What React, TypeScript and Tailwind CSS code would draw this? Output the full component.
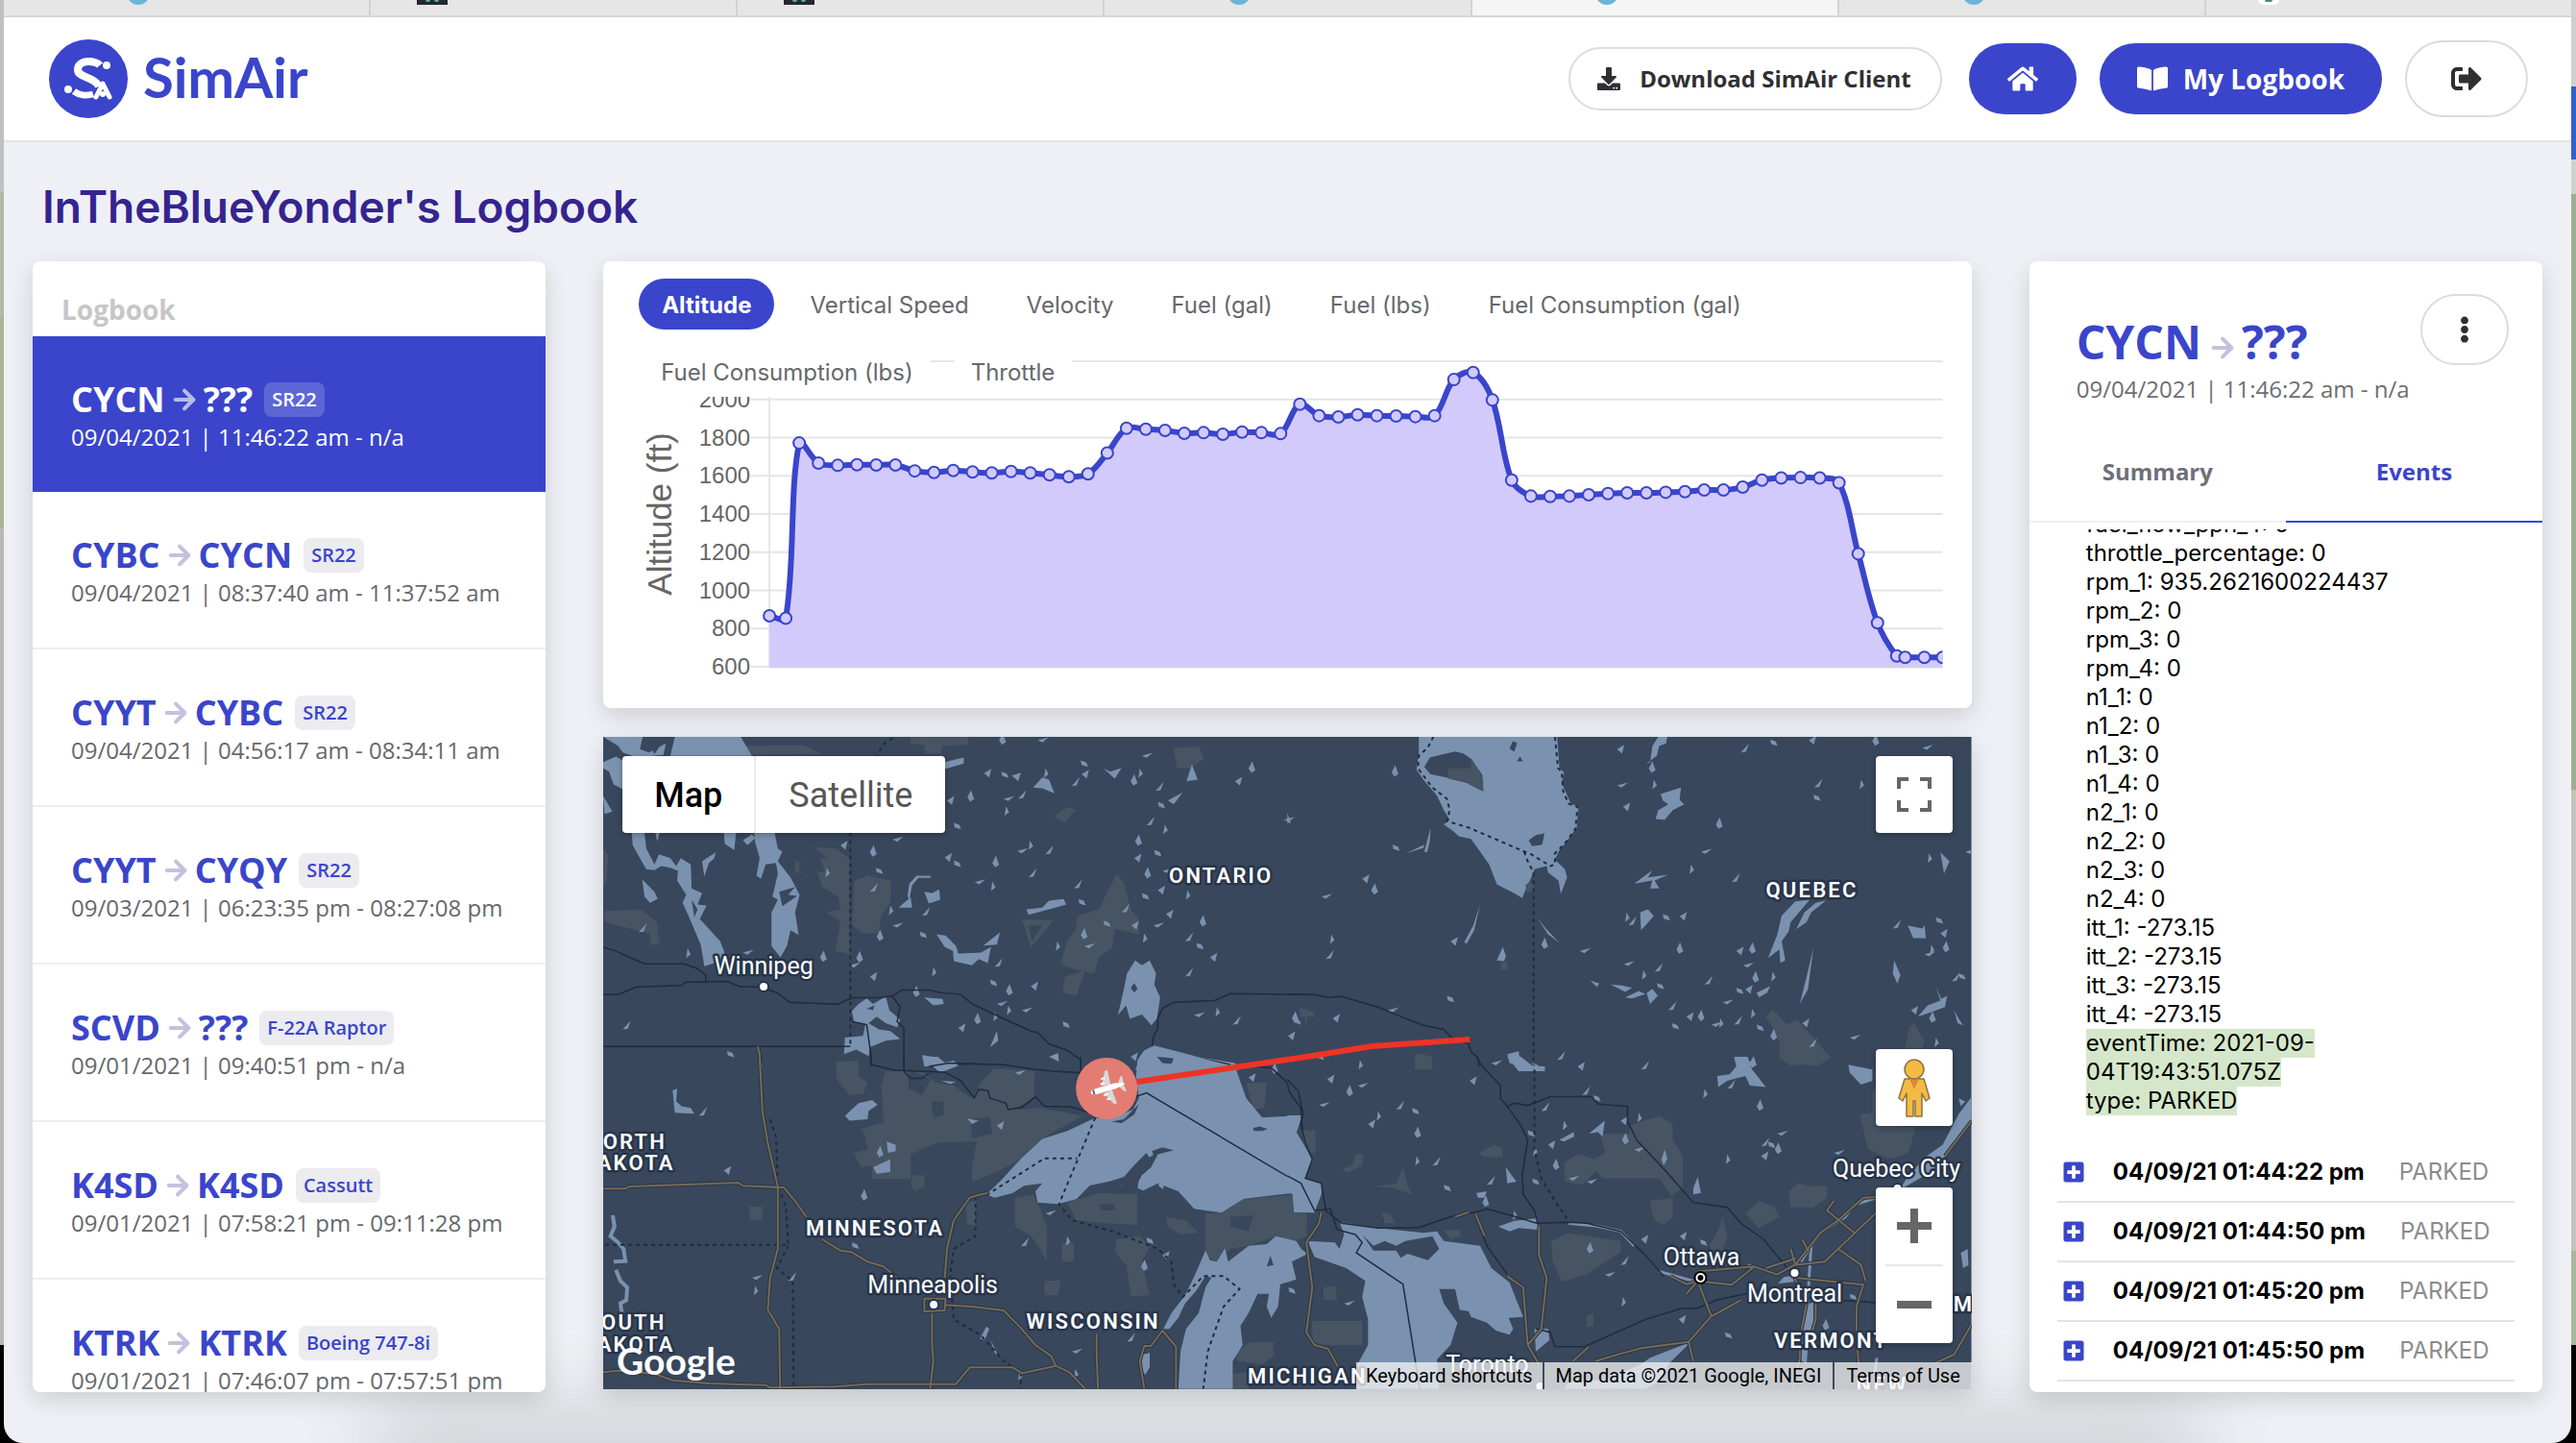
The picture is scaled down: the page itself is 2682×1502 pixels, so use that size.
import React from "react";
import { ArrowRight } from "lucide-react";
import {
  FaBookOpen,
  FaDownload,
  FaEllipsisV,
  FaHome,
  FaPlusSquare,
  FaSignOutAlt,
} from "react-icons/fa";

const body = "font-['Open_Sans','Noto_Sans',sans-serif]";
const inter = "font-['Inter',sans-serif]";

/* ---------- window chrome ---------- */

type Favicon = "blue" | "dark" | "google";

const browserTabs: { icon: Favicon; active?: boolean }[] = [
  { icon: "blue" },
  { icon: "dark" },
  { icon: "dark" },
  { icon: "blue" },
  { icon: "blue", active: true },
  { icon: "blue" },
  { icon: "google" },
];

function TabIcon({ icon }: { icon: Favicon }) {
  if (icon === "blue") {
    return <span className="-mt-[19px] ml-32 block size-6 rounded-full bg-[#6cb4d8]" />;
  }
  if (icon === "dark") {
    return (
      <span className="ml-12 flex h-[5px] w-8 justify-center gap-1 bg-[#23292e]">
        <span className="h-[2px] w-[5px] rounded-b-full bg-[#5fae98]" />
        <span className="h-[2px] w-[5px] rounded-b-full bg-[#5fae98]" />
      </span>
    );
  }
  return (
    <span className="ml-[54px] flex h-[5px] w-[22px] justify-center rounded-b-full bg-white">
      <span className="h-[2px] w-2 rounded-b-full bg-[#3f8f66]" />
    </span>
  );
}

function BrowserTabs() {
  return (
    <div className="flex h-[18px] shrink-0 overflow-hidden border-b-2 border-[#d6d6d6] bg-[#e6e6e6]">
      {browserTabs.map((tab, i) => (
        <button
          key={i}
          type="button"
          aria-label={`Tab ${i + 1}`}
          className={`flex flex-1 items-start border-r-2 last:border-r-0 border-[#d2d2d2] ${tab.active ? "bg-[#f5f5f5]" : ""}`}
        >
          <TabIcon icon={tab.icon} />
        </button>
      ))}
    </div>
  );
}

function Logo() {
  return (
    <a href="#" className="flex items-center gap-4 text-[#3a45cb]">
      <svg viewBox="0 0 82 82" className="size-[82px]" aria-hidden="true">
        <circle cx="41" cy="41" r="41" fill="#3a45cb" />
        <g fill="none" stroke="#fff" strokeLinecap="butt">
          <path d="M53 27C49 22 31 20 30 31C29 40 48 39 52 49" strokeWidth="8" />
          <path d="M26 54C31 58 39 59 46 57" strokeWidth="7" />
          <path d="M49 60L56 46L63 60" strokeWidth="5" strokeLinejoin="round" strokeLinecap="round" />
        </g>
        <circle cx="60" cy="27" r="4" fill="#fff" />
        <circle cx="20" cy="52" r="4" fill="#fff" />
        <circle cx="56" cy="57" r="3" fill="#fff" />
      </svg>
      <span className="pb-1 font-['Lato',sans-serif] text-[58px] font-bold leading-none">SimAir</span>
    </a>
  );
}

function Header() {
  return (
    <header className="flex h-[130px] shrink-0 items-center justify-between border-b-2 border-[#e0e3e8] bg-white pl-[47px] pr-[45px]">
      <Logo />
      <nav className={`flex items-center gap-6 ${body} font-bold`}>
        <button
          type="button"
          className="mr-1 flex h-[66px] items-center gap-5 rounded-full border-2 border-[#dcdcdc] pl-7 pr-[30px] text-2xl text-[#2f3033]"
        >
          <FaDownload className="size-6" />
          Download SimAir Client
        </button>
        <button
          type="button"
          aria-label="Home"
          className="flex h-[74px] w-28 items-center justify-center rounded-full bg-[#3a45cb] text-white"
        >
          <FaHome className="size-8" />
        </button>
        <button
          type="button"
          className="flex h-[74px] items-center gap-4 rounded-full bg-[#3a45cb] px-[39px] text-[28px] text-white"
        >
          <FaBookOpen className="size-8" />
          My Logbook
        </button>
        <button
          type="button"
          aria-label="Sign out"
          className="flex h-20 w-32 items-center justify-center rounded-full border-2 border-[#dcdcdc] text-[#2f3033]"
        >
          <FaSignOutAlt className="size-8" />
        </button>
      </nav>
    </header>
  );
}

/* ---------- logbook list ---------- */

type Flight = { from: string; to: string; plane: string; time: string };

const flights: Flight[] = [
  { from: "CYCN", to: "???", plane: "SR22", time: "09/04/2021 | 11:46:22 am - n/a" },
  { from: "CYBC", to: "CYCN", plane: "SR22", time: "09/04/2021 | 08:37:40 am - 11:37:52 am" },
  { from: "CYYT", to: "CYBC", plane: "SR22", time: "09/04/2021 | 04:56:17 am - 08:34:11 am" },
  { from: "CYYT", to: "CYQY", plane: "SR22", time: "09/03/2021 | 06:23:35 pm - 08:27:08 pm" },
  { from: "SCVD", to: "???", plane: "F-22A Raptor", time: "09/01/2021 | 09:40:51 pm - n/a" },
  { from: "K4SD", to: "K4SD", plane: "Cassutt", time: "09/01/2021 | 07:58:21 pm - 09:11:28 pm" },
  { from: "KTRK", to: "KTRK", plane: "Boeing 747-8i", time: "09/01/2021 | 07:46:07 pm - 07:57:51 pm" },
];

function FlightRow({ flight, selected }: { flight: Flight; selected: boolean }) {
  return (
    <li className={selected ? "bg-[#3a45cb]" : "border-b-2 border-[#eeeef0]"}>
      <button type="button" className="flex h-[162px] w-full flex-col items-start pl-10 pt-[45px] text-left">
        <span
          className={`flex h-[42px] items-center text-4xl font-bold ${selected ? "text-white" : "text-[#3a45cb]"}`}
        >
          {flight.from}
          <ArrowRight
            className={`mx-1 size-8 ${selected ? "text-[#b9bbee]" : "text-[#c5c0de]"}`}
            strokeWidth={3}
          />
          {flight.to}
          <span
            className={`ml-3 flex h-9 items-center rounded-lg px-2 text-xl font-semibold ${selected ? "bg-[#5d66d5] text-white" : "bg-[#ebebf0] text-[#3a45cb]"}`}
          >
            {flight.plane}
          </span>
        </span>
        <span className={`text-2xl leading-9 ${selected ? "text-white" : "text-[#66686c]"}`}>{flight.time}</span>
      </button>
    </li>
  );
}

const card = "rounded-lg bg-white shadow-[0_8px_24px_rgba(0,0,0,0.14)]";

function LogbookList() {
  return (
    <section className={`flex min-w-0 flex-col overflow-hidden ${card} ${body}`}>
      <h2 className="h-[78px] shrink-0 px-[30px] pt-[30px] text-[28px] font-bold leading-10 text-[#c6c6c8]">
        Logbook
      </h2>
      <ul className="min-h-0 flex-1 overflow-hidden">
        {flights.map((f, i) => (
          <FlightRow key={i} flight={f} selected={i === 0} />
        ))}
      </ul>
    </section>
  );
}

/* ---------- altitude chart ---------- */

const metrics = [
  "Altitude",
  "Vertical Speed",
  "Velocity",
  "Fuel (gal)",
  "Fuel (lbs)",
  "Fuel Consumption (gal)",
  "Fuel Consumption (lbs)",
  "Throttle",
];

const cruise = [
  1772, 1667, 1655, 1658, 1657, 1657, 1626, 1618, 1628, 1620, 1615, 1623, 1615, 1605, 1595, 1610, 1720, 1849, 1844,
  1838, 1823, 1826, 1818, 1829, 1826, 1821, 1975, 1915, 1908, 1920, 1915, 1913, 1910, 1915, 2104, 2141, 1997, 1578,
  1494, 1492, 1494, 1501, 1507, 1511, 1511, 1514, 1517, 1526, 1526, 1541, 1578, 1589, 1591, 1589, 1564, 1192, 831, 657,
];

const CHART_TOP = 17;
const CHART_BOTTOM = 335;
const yOf = (ft: number) => CHART_BOTTOM - ((ft - 600) / 1600) * (CHART_BOTTOM - CHART_TOP);

type Pt = { x: number; y: number };

const points: Pt[] = [
  { x: 173, y: yOf(867) },
  { x: 190, y: yOf(855) },
  ...cruise.map((ft, i) => ({ x: 204 + i * 20.04, y: yOf(ft) })),
  { x: 1355, y: yOf(650) },
  { x: 1375, y: yOf(650) },
  { x: 1394, y: yOf(650) },
];

function smoothLine(pts: Pt[]) {
  const tension = 0.35;
  const handles = pts.map((p, i) => {
    const prev = pts[i - 1] ?? p;
    const next = pts[i + 1] ?? p;
    const d1 = Math.hypot(p.x - prev.x, p.y - prev.y);
    const d2 = Math.hypot(next.x - p.x, next.y - p.y);
    const a = (tension * d1) / (d1 + d2 || 1);
    const b = (tension * d2) / (d1 + d2 || 1);
    return {
      in: { x: p.x - a * (next.x - prev.x), y: p.y - a * (next.y - prev.y) },
      out: { x: p.x + b * (next.x - prev.x), y: p.y + b * (next.y - prev.y) },
    };
  });
  return pts
    .map((p, i) => {
      if (i === 0) return `M${p.x} ${p.y}`;
      const c1 = handles[i - 1].out;
      const c2 = handles[i].in;
      return `C${c1.x} ${c1.y} ${c2.x} ${c2.y} ${p.x} ${p.y}`;
    })
    .join("");
}

function AltitudeChart() {
  const line = smoothLine(points);
  const ticks = [600, 800, 1000, 1200, 1400, 1600, 1800, 2000, 2200];
  return (
    <svg viewBox="0 0 1424 378" className="block h-auto w-full" role="img" aria-label="Altitude in feet over time">
      <defs>
        <clipPath id="plot">
          <rect x="150" y="0" width="1244" height="378" />
        </clipPath>
      </defs>
      {ticks.map((t) => (
        <g key={t}>
          <line x1="153" x2="1394" y1={yOf(t)} y2={yOf(t)} stroke="#e5e5e5" strokeWidth="2" />
          {t < 2200 && (
            <text
              x="153"
              y={yOf(t) + 8}
              textAnchor="end"
              className="fill-[#666666] font-['Liberation_Sans',sans-serif] text-2xl"
            >
              {t}
            </text>
          )}
        </g>
      ))}
      <line x1="173" x2="173" y1="17" y2="335" stroke="#e5e5e5" strokeWidth="2" />
      <text
        transform="translate(71 176) rotate(-90)"
        textAnchor="middle"
        className="fill-[#666666] font-['Liberation_Sans',sans-serif] text-[35px]"
      >
        Altitude (ft)
      </text>
      <g clipPath="url(#plot)">
        <path d={`${line}V335H173Z`} fill="#d2cafa" />
        <line x1="173" x2="1394" y1="335" y2="335" stroke="#d3cfe6" strokeWidth="2" />
        <path d={line} fill="none" stroke="#3a45cb" strokeWidth="6" strokeLinejoin="round" />
        {points.map((p, i) => (
          <circle key={i} cx={p.x} cy={p.y} r="6" fill="#d2cafa" stroke="#3a45cb" strokeWidth="2" />
        ))}
      </g>
    </svg>
  );
}

function ChartCard() {
  return (
    <section className={`${card} overflow-hidden`}>
      <div
        role="tablist"
        className={`relative z-10 flex flex-wrap gap-x-6 gap-y-[17px] pl-[42px] pr-32 pt-[18px] text-2xl ${inter}`}
      >
        {metrics.map((m, i) => (
          <button
            key={m}
            type="button"
            role="tab"
            aria-selected={i === 0}
            className={
              i === 0
                ? "-mx-[5px] h-[53px] rounded-full bg-[#3a45cb] px-6 pt-[2px] font-bold text-white"
                : "h-[53px] bg-white px-[18px] pt-[2px] text-[#66686c]"
            }
          >
            {m}
          </button>
        ))}
      </div>
      <div className="-mt-[54px]">
        <AltitudeChart />
      </div>
    </section>
  );
}

/* ---------- map ---------- */

const LAND = "#38475c";
const WATER = "#7a92af";
const PARK = "#465463";

const SLIVERS = [
  "l16 -14l-5 28z",
  "l8 -22l7 28l-9 8z",
  "l24 -9l-14 16z",
  "l7 18l-10 12z",
  "l18 -28l-7 26z",
  "l12 6l4 14l-14 -6z",
];

function Lakes({ at }: { at: number[][] }) {
  return <path fill={WATER} d={at.map(([x, y], i) => `M${x} ${y}${SLIVERS[i % SLIVERS.length]}`).join("")} />;
}

function Line({ d, kind }: { d: string; kind: "road" | "border" | "dash" }) {
  if (kind === "road") {
    return (
      <g fill="none" strokeLinejoin="round">
        <path d={d} stroke="#2b3544" strokeWidth="4" vectorEffect="non-scaling-stroke" />
        <path d={d} stroke="#746a58" strokeWidth="2" vectorEffect="non-scaling-stroke" />
      </g>
    );
  }
  return (
    <path
      d={d}
      fill="none"
      stroke="#1f2c3e"
      strokeWidth={kind === "dash" ? 2 : 1.5}
      strokeDasharray={kind === "dash" ? "4 4" : undefined}
      vectorEffect="non-scaling-stroke"
    />
  );
}

function NorthWest() {
  return (
    <g transform="matrix(0.472 0 0 0.3333 -8 -17)">
      <path
        fill={PARK}
        d="M330 80L460 78L500 105L340 108ZM695 51H822V75L765 80L762 104H728L725 78L695 72ZM1275 85L1330 82L1342 120L1310 150L1282 150ZM1010 300L1040 270L1058 280L1035 318ZM20 595L100 590L135 630L142 700L122 700L118 665L60 645L20 630ZM480 395L530 400L560 430V730L528 720L540 630L510 600L540 590L535 550L500 520L490 480L440 475L440 440L510 430ZM570 500L600 485L652 500L650 570L630 610L625 665L590 665L566 640ZM1150 480L1165 510L1180 590L1198 620V670L1145 650L1140 710L1110 740L1100 790L1060 780L1025 760L1040 690L1060 650L1062 610L1110 590L1130 530ZM940 620L1010 625L960 710ZM1035 800L1080 780L1060 860L1030 850ZM17 400L28 420L25 500L17 520ZM1450 900H1568V960L1560 900Z"
      />
      <path fill={LAND} d="M448 440L495 430L505 470L470 485L450 470ZM955 640L985 640L962 690Z" />
      <path
        fill={WATER}
        d="M17 51H104L98 90L118 100L155 72L150 108L90 115L60 100L50 80ZM175 51H320L345 111H165ZM17 130L45 113L60 125V215L40 200L30 160L17 150ZM17 235L37 285L20 292ZM80 350H108L112 400L130 450L140 418L165 430L178 455L188 430L210 450L212 525L235 540L225 575L245 578L230 620L275 690L290 745L240 768L232 700L205 610L192 570L200 545L180 500L182 470L165 460L145 455L130 468L112 465L98 430L82 390ZM350 350H395L402 400L412 410L402 440L430 490L450 545L440 600L448 670L430 655L422 705L408 740L388 705V600L402 560L390 550L402 480L398 445L375 450L365 495L355 485L362 430L352 380ZM283 350H310L306 405L285 385ZM325 375L345 355L352 368L335 390ZM132 350H142L136 378ZM235 440L265 412L262 430L250 445L240 488ZM103 497L130 535L137 558L120 570L108 550Z"
      />
      <path fill={LAND} d="M120 80L140 85L130 105ZM405 535L440 520L425 545L445 548L412 580ZM212 560L225 590L218 615Z" />
      <path
        fill={WATER}
        d="M565 908L580 885L598 868L612 885L640 862L648 905L672 935L665 958L640 945L620 925L602 945L625 965L650 970L672 995L640 1000L605 1020L602 1048L575 1028L548 1042L550 990L590 985L595 950L570 940ZM1190 750L1205 765L1222 750L1236 790L1232 825L1245 865L1238 930L1226 952L1205 918L1178 932L1170 890L1152 920L1165 840L1172 790ZM950 590L985 585L1000 563L1032 558L1038 575L1000 590L955 607ZM752 668L772 672L795 705L800 728L850 725L872 708L865 758L845 745L830 765L790 752L788 720L770 708ZM855 703L892 662L885 700ZM725 535L742 540L758 528L760 560L735 572ZM668 585L695 552L698 585ZM965 210L985 178L1000 185L1012 228L985 212ZM1120 150L1135 160L1160 148L1145 182ZM1303 190L1315 138L1328 185ZM918 172L938 163L932 190ZM770 130L812 116V135L770 152ZM688 548L692 510L708 485L740 486L738 492L712 492L698 515L692 560ZM1262 250L1295 225L1275 262ZM725 865L765 870L768 885L745 890ZM720 1045L745 1050L770 1078L725 1080ZM1000 1050L1020 1038L1022 1065ZM870 1020L885 970L888 1000ZM1232 1018L1300 1045L1410 1070L1420 1090H1190L1205 1050Z"
      />
      <path fill={LAND} d="M1180 835L1188 820L1195 838L1188 850ZM598 900L615 890L612 905Z" />
      <Lakes
        at={[
          [857, 165], [890, 62], [975, 62], [992, 150], [1050, 205], [1070, 125], [1072, 168], [1180, 190], [1205, 110],
          [1200, 150], [1235, 220], [1240, 255], [1410, 190], [1440, 150], [1518, 310], [1255, 325], [1215, 328], [1232, 405],
          [1188, 430], [1190, 378], [930, 408], [958, 375], [992, 418], [790, 438], [770, 428], [875, 445], [836, 505],
          [875, 503], [955, 490], [1205, 540], [1240, 530], [1210, 480], [1250, 470], [1305, 530], [1055, 525], [1065, 558],
          [1258, 605], [1332, 630], [1230, 640], [1210, 665], [1160, 600], [1120, 625], [1182, 640], [1070, 670], [1078, 705],
          [1018, 690], [1300, 690], [1325, 695], [1355, 740], [620, 675], [655, 640], [650, 578], [720, 610], [715, 660],
          [605, 800], [575, 742], [560, 765], [745, 770], [880, 770], [870, 810], [960, 830], [905, 845], [885, 885],
          [910, 890], [1300, 800], [1030, 940], [800, 960], [835, 935], [1320, 920], [1370, 895], [1405, 950], [1540, 930],
          [1527, 985], [495, 740], [325, 725], [203, 712], [60, 965], [290, 1032], [540, 390], [605, 412], [655, 372],
          [510, 460], [605, 535], [790, 320], [775, 250], [820, 240], [900, 245], [905, 268], [932, 245], [895, 160],
          [1180, 1050], [700, 850], [940, 905], [880, 910], [95, 662], [618, 460],
        ]}
      />
      <Line kind="border" d="M17 708L45 720L75 740L108 760L195 760L225 775L243 795V815M17 856H50L90 832L190 828L198 818L290 815L320 832L365 832L400 850L428 880L535 886L565 866L630 865L655 860L675 842L735 842L760 850L805 855L830 885L860 905L890 925L960 970L975 975L1000 1010L1040 1030L1070 1060V1080M655 862L672 895L665 940L680 960V1080M565 940L598 950L608 1050V1080M17 1018H562M760 1075L830 1073M1228 1015L1230 990L1240 960V930L1250 900L1275 880L1365 875L1400 853L1568 856M1228 1015L1215 1080M1300 1045L1400 1075" />
      <Line kind="dash" d="M562 350V1018M655 55L635 75L620 110" />
      <Line kind="road" d="M358 1018L368 1085" />
    </g>
  );
}

function NorthEast() {
  return (
    <g transform="matrix(0.472 0 0 0.3333 712 -17)">
      <path
        fill={PARK}
        d="M1055 925L1070 900L1100 950L1125 935L1165 1000L1200 1055L1170 1070L1110 1078L1085 1050V1000ZM1370 960L1382 945L1405 1000L1400 1025H1362ZM470 755H485V780H472ZM28 897L60 912V925H28ZM282 1040L318 1048L320 1080H282Z"
      />
      <path
        fill={WATER}
        d="M290 51H595L600 150L610 162L605 195L625 260L642 270L638 335L615 380L600 405L590 435L612 465L617 490L603 542L598 500L575 475L572 455L545 465L535 500L525 530L518 555L500 540L462 512L445 450L405 370L378 362L365 345L345 325L358 310L345 280L330 235L300 185L285 155L290 100Z"
      />
      <path
        fill={LAND}
        d="M302 145L315 115L370 97L388 103L405 120L430 170L432 222L395 195L350 178L315 168ZM490 88L497 65L507 70L500 98ZM506 128L513 112L519 128ZM532 375L548 358L567 353L562 388L540 393Z"
      />
      <path fill={PARK} d="M355 150H405V118L422 155L432 190V222L395 195L355 182ZM525 515L535 502L545 520L540 535H528Z" />
      <path
        fill={WATER}
        d="M1090 610L1120 565L1152 560L1110 630L1105 660L1090 690L1098 750L1087 757L1085 715L1060 742L1080 670ZM1165 570L1188 562L1155 600L1145 630L1122 652L1140 600ZM823 230L868 210L865 248L875 262L850 280L832 310L812 308L818 280L840 262L828 250ZM800 130L805 80L818 51H838L835 72L820 80L815 110L790 137ZM778 600L795 590L808 610L795 632L780 655ZM1440 412L1460 440L1448 478ZM1338 750L1352 795L1345 822L1335 790ZM1390 925L1412 890L1440 875L1430 830L1442 870L1455 860L1450 895L1405 918ZM1368 640L1400 650L1405 640L1408 680L1380 680ZM485 1042L510 1033L515 1080L490 1070ZM792 852L805 838L817 860L800 885ZM713 825L738 828L760 835L745 848ZM745 865L775 845L790 855L760 868ZM1035 850L1065 830L1058 850L1040 865ZM668 812L688 822L682 832ZM462 750L475 708L482 735L478 752ZM550 615L570 650L600 695L575 668ZM390 693L410 640L425 575L412 655L395 698ZM1130 885L1145 800L1160 710L1148 840ZM765 510L805 468L795 490L840 482L810 500L820 525L800 525L805 500ZM1470 905L1480 930L1490 952L1478 945ZM302 410L316 335L314 380L308 412ZM262 415L302 388L300 398ZM0 290L8 320H0Z"
      />
      <Lakes
        at={[
          [727, 90], [797, 150], [727, 203], [808, 185], [1000, 100], [1065, 60], [1150, 62], [1290, 65], [1400, 85],
          [1265, 185], [1162, 210], [1160, 232], [740, 270], [945, 325], [912, 410], [890, 450], [980, 505], [232, 388],
          [165, 495], [185, 530], [75, 550], [97, 668], [85, 745], [352, 860], [360, 690], [560, 700], [645, 720], [748, 600],
          [752, 640], [828, 605], [865, 612], [858, 715], [742, 760], [785, 780], [810, 785], [815, 820], [990, 720],
          [1018, 715], [1005, 765], [1070, 785], [920, 825], [990, 835], [1010, 840], [1025, 805], [960, 880], [1025, 900],
          [840, 905], [848, 945], [880, 925], [905, 925], [935, 950], [955, 930], [985, 950], [1035, 950], [1135, 945],
          [1065, 985], [1240, 990], [1430, 990], [1335, 650], [1430, 615], [1440, 665], [1445, 710], [1405, 730], [1420, 700],
          [1465, 815], [1480, 790], [1375, 905], [1415, 930], [1495, 410], [1415, 415], [1150, 1020], [65, 1040], [100, 930],
          [10, 930], [222, 905], [160, 1060], [595, 1060], [540, 1070], [1015, 1070], [230, 162],
        ]}
      />
      <Line kind="border" d="M0 856H60L90 865L120 862L200 895L260 930L300 952L345 965L362 990L400 1010L405 1035L418 1050L424 1080" />
      <Line kind="dash" d="M322 51L310 85L290 110L288 150L320 210L352 245L358 280L352 315L400 335L490 390L540 420L580 455L590 450V415L612 385L635 340L640 270L620 260L608 220L605 160L597 150L590 51M522 410L530 440L543 475V1080" />
    </g>
  );
}

function SouthWest() {
  return (
    <g transform="matrix(0.472 0 0 0.3333 -8 333)">
      <path
        fill={PARK}
        d="M530 15L580 12V60L600 80L590 118L560 120L532 70ZM640 45L720 45L750 80L790 90L830 130L850 80L880 35L968 45V130L920 165L985 160L1075 185L985 255L925 330L885 360L830 390V345L840 265L755 268L720 290L695 305V382H610V340L585 345L570 300L600 290L595 250L585 225L635 205L630 90ZM1435 82L1480 80L1475 160L1450 165ZM340 468H368V510H340ZM925 440L965 430L980 470L995 530V640L980 600L960 560L925 530ZM1040 455L1110 425L1195 428V525L1120 520L1060 510ZM1028 580H1055V640H1028ZM1148 570L1200 560L1222 590L1205 640L1222 745L1180 748L1170 650L1145 610ZM990 700L1025 698L1020 745H990ZM1345 490L1380 487L1430 445L1538 430L1568 480V560L1540 575L1500 560L1440 590L1400 600L1370 640L1345 620ZM1258 500L1300 510L1330 550L1290 555L1262 530ZM1410 930L1440 892L1495 890V935L1470 960L1415 950ZM1405 990L1440 985V1037H1400ZM700 370H725V405L705 420L695 400ZM815 455L838 450V525H820Z"
      />
      <path fill={LAND} d="M690 40L740 70L720 120L690 100ZM740 140H768V180L745 190ZM828 195L870 190L875 240L830 255ZM1110 460H1145V480H1115ZM1400 500L1450 495L1440 545L1400 530Z" />
      <path
        fill={WATER}
        d="M862 430L895 385L940 315L985 257L1040 232L1100 192L1150 185L1185 165L1198 130L1192 60L1195 10L1210 -20L1232 -35L1300 -10L1365 15L1410 30L1435 130L1470 190L1558 183L1545 240L1580 320L1563 380L1600 395V430L1585 487L1540 485L1538 425L1430 443L1380 487L1320 475L1285 420L1240 395L1208 418L1195 410L1200 370L1165 403L1130 390L1090 402L1060 445L1020 460L975 455L970 420L985 395L945 403L920 425L880 440Z"
      />
      <path fill={LAND} d="M1120 395L1165 375L1190 335L1215 300L1250 283L1275 292L1240 305L1225 345L1205 370L1190 405L1150 400ZM1138 203L1165 195L1198 148L1188 180L1160 207ZM1450 222L1465 218L1482 226L1470 232H1452ZM1238 0L1275 5L1270 22L1250 20Z" />
      <path
        fill={WATER}
        d="M1285 1037L1290 920L1302 850L1330 800L1345 720L1358 690L1345 685L1325 730L1300 770L1285 815L1265 850L1252 850L1270 800L1300 745L1322 680L1345 605L1355 635L1370 640L1388 598L1395 640L1440 590L1480 585L1500 560L1545 575L1562 612L1535 640L1545 695L1510 710L1505 780L1490 815L1480 780L1485 740L1460 740L1440 800L1422 840L1427 900L1405 950V1037ZM170 105L180 100L178 140L190 155L210 160L218 178L175 175ZM550 185L580 145L610 135L622 150L602 170L600 195L560 200ZM720 0H755L770 18L790 12L800 28L760 50ZM1205 930L1222 925V970L1212 993L1202 970ZM642 265L662 275V295L645 300ZM612 345L650 320V360L620 365ZM762 75L795 78L782 85ZM820 193L845 200L830 210ZM848 880L862 842L868 850L858 885ZM872 885L888 935L878 920Z"
      />
      <path fill={LAND} d="M1480 655L1488 622L1495 650Z" />
      <path
        fill="none"
        stroke={WATER}
        strokeWidth="4"
        vectorEffect="non-scaling-stroke"
        d="M38 495L42 530L33 560L50 580L62 600L66 638L40 640M45 665L55 700L70 720L68 760L55 770L58 800"
      />
      <Lakes
        at={[
          [283, 355], [585, 435], [992, 488], [1040, 560], [938, 592], [1215, 565], [1250, 620], [1203, 655], [345, 690],
          [352, 715], [425, 700], [565, 580], [885, 215], [620, 300], [1050, 920], [1058, 975], [1172, 890], [1528, 720],
          [1440, 65], [1490, 40], [925, 50], [935, 980], [228, 185], [705, 540], [1240, 400], [1215, 300],
        ]}
      />
      <Line kind="dash" d="M385 195L398 250L402 400L420 470L425 587H17M425 590L400 660L435 700L437 1037M862 432L990 317H1062M1102 190L1022 460L1050 510L1140 545L1240 600L1270 640L1275 710L1295 750L1340 685H1385L1420 725L1385 780L1350 920L1340 1037M838 435V560L790 600L782 680L790 820L850 870L900 950L938 985V1037" />
      <Line kind="border" d="M605 0L610 25L660 42L770 48L805 75L835 128L845 102L865 105L870 130L905 145L910 165L940 158L970 125L990 155L1050 157L1090 175L1215 113L1555 398L1568 480M680 0V45L695 68H720L735 52M735 30L780 20L900 25L960 38L1010 45L1070 50V0M1430 28L1490 35L1525 80L1530 110L1555 160L1560 260" />
      <Line kind="road" d="M17 412H65L75 405L315 393L325 403L415 408L440 450L465 500M362 0L368 170L380 270L402 405V600L385 690L380 790L405 850L407 1037M500 570L540 605L565 610L600 640L635 655L665 690M865 425L850 430L825 440L790 510L775 600L770 690M725 755V795L770 792L772 755ZM742 800V900L745 950L738 1037M770 775L830 780L900 792L940 850L970 900L1005 935L1015 965L1045 985L1080 1037M17 985L50 980L130 990L170 1010L250 1020L375 1025L385 1033L530 1030L600 1022L735 1022H795L825 970H920L940 988L1015 965M1105 865V930L1108 1037M1250 855L1280 905V1037M1250 855L1225 903H1210L1200 950L1210 1037" />
    </g>
  );
}

function SouthEast() {
  return (
    <g transform="matrix(0.472 0 0 0.3333 712 333)">
      <path
        fill={PARK}
        d="M755 215L820 185L850 210V260L872 310V410L850 430V500L830 525L808 510L800 450L850 440L820 380H695L665 330L700 300L690 240H755ZM610 330L640 305L680 320L685 350L650 400L612 390ZM582 575L620 550L670 562L735 575V610L660 680L605 702L585 640ZM1010 490L1040 450L1075 470L1085 500L1040 535ZM1105 420L1125 395L1155 405L1190 402V440L1160 470L1110 470ZM1262 180L1290 175V110L1310 50V215L1385 220L1370 300L1330 320L1280 290ZM425 300L455 275L475 285V315L430 312ZM30 230H62V300H40ZM122 350L145 335L150 305L168 305L165 340L130 362ZM190 405L240 395L255 345L265 400L275 430L235 410ZM55 825H165V900H55ZM80 720L105 715L110 760H80ZM345 540H382V560L360 570ZM208 485L225 490L240 520H215ZM930 590L950 540L960 500L970 560L960 610L940 625ZM660 810L675 800V840L660 845ZM280 10H318V40H282ZM1085 0H1200L1170 30L1100 20Z"
      />
      <path
        fill={WATER}
        d="M45 575L105 580L115 600L125 555L115 515L200 535L300 550L330 545L345 575L425 590L450 660L490 705L520 812L488 815L498 850L490 868L460 855L440 830L405 812L400 795L380 790L370 725L335 725L345 770L375 830L360 900L330 945L335 1037H155V960L178 900V820L165 750L172 700L130 660L60 625ZM0 570L45 615L10 640L18 690L0 705ZM0 183H30L20 235L55 320L38 380L75 395V430L60 480L15 485L12 430L0 420ZM1509 125V200L1450 310L1425 355L1370 400L1350 415L1370 370L1410 310L1445 275L1480 180ZM465 530L500 512L550 505L552 540L510 535L490 545ZM545 850L575 850L578 885L548 920ZM1237 25L1290 40V75L1265 87L1240 50ZM948 60L975 55L990 30L985 0H1015L1025 40L1055 95L1020 90L1010 60L970 75L950 95ZM485 0H515L540 28L568 30V45H510ZM565 40L575 80M610 1037L620 1015L700 1008L780 960L800 940L890 890L840 960L825 1010L790 1037ZM1140 780L1160 765V830L1150 870L1145 960L1130 945ZM665 240L700 200L695 250L685 235ZM1082 708L1095 688L1125 682L1122 702ZM1485 612L1500 600L1502 650L1490 660ZM1480 130L1495 140L1485 155ZM600 260L632 235V250L610 265ZM825 320L832 290L838 318L830 340ZM895 410L905 375L912 425L895 430ZM417 425L440 420L435 440L420 440ZM482 345L505 390L485 395Z"
      />
      <path fill={LAND} d="M165 555L190 590L215 575L240 590L260 575L320 560L335 600L310 635L265 615L250 628L240 605L190 605ZM90 470L105 500L125 550L110 555Z" />
      <path
        fill="none"
        stroke={WATER}
        strokeWidth="3"
        vectorEffect="non-scaling-stroke"
        d="M1300 440L1250 462L1230 500L1175 550L1150 600L1132 640M1155 590L1150 700L1148 780M620 520L680 528L735 545L765 590M820 670L895 700M1015 650L1080 680M1300 940L1290 1037"
      />
      <Lakes
        at={[
          [88, 70], [130, 110], [155, 90], [200, 170], [240, 165], [275, 160], [178, 210], [280, 240], [70, 150], [285, 310],
          [320, 340], [345, 400], [402, 75], [430, 455], [450, 20], [545, 280], [560, 170], [540, 380], [575, 275], [585, 340],
          [620, 380], [610, 200], [650, 120], [675, 120], [735, 200], [738, 260], [765, 290], [775, 175], [780, 40], [530, 230],
          [640, 30], [1035, 155], [1080, 240], [970, 305], [1045, 280], [1060, 265], [1045, 310], [1075, 290], [1205, 300],
          [920, 100], [970, 100], [910, 570], [865, 560], [660, 600], [700, 680], [740, 750], [735, 650], [965, 860],
          [863, 820], [1180, 840], [125, 770], [500, 480], [440, 400], [1240, 740], [780, 570], [1020, 20], [660, 390],
        ]}
      />
      <Line kind="dash" d="M545 40V290L560 380L590 450L620 512" />
      <Line kind="border" d="M0 70L25 110L35 180L30 210L40 270L55 320L40 380L75 395L85 480L120 520L200 535L290 533L370 495L415 485L440 475L500 498L550 520L620 517L660 520L735 545L790 620L830 685M0 372L30 395L60 480L95 475L110 540L150 555L165 580L152 612L255 710L292 1037M418 0L430 30L470 90V130L485 155L515 215L530 260L518 370L520 430L545 480L552 520M485 155L500 145L530 152L580 125H670L685 148L750 155V200L770 260L830 350L895 455L970 470L1000 520L1050 570L1085 630L1105 665M415 500L440 590L485 680M548 850L580 860L590 905H655L790 820L870 785L905 785L945 760L1010 740L1300 768" />
      <Line kind="road" d="M75 485L70 520L42 580L55 720L42 860L60 900L90 912L120 990M415 490L435 560M485 685L520 720L530 900L555 960M555 530V620L572 690L560 850L530 900M370 500L400 485M630 950L665 905M845 685L880 710L905 700L980 712L1030 655L1080 680L1118 650L1185 640L1300 485M880 740L905 700L935 810L885 890L780 910L740 925L680 950M935 810L1000 760M885 890L895 950M1120 690L1270 712L1255 780V880L1265 1037M1250 550L1190 480L1205 450M1215 600L1265 650L1275 700M1300 438L1270 440L1215 510L1175 550L1120 650L1110 600M1118 690L1145 770L1130 880V940L1115 1037M1165 770V820L1150 900M1509 835L1470 930L1430 955M1509 200L1450 310M1055 660L1120 630M1030 655L905 670M1135 570L1150 610" />
    </g>
  );
}

const regionLabels: [string, number, number][] = [
  ["ONTARIO", 643, 152],
  ["QUEBEC", 1258, 167],
  ["NORTH", 24, 429],
  ["DAKOTA", 26, 451],
  ["MINNESOTA", 283, 519],
  ["WISCONSIN", 510, 616],
  ["SOUTH", 24, 617],
  ["DAKOTA", 26, 640],
  ["MICHIGAN", 733, 673],
  ["VERMONT", 1278, 636],
  ["MAINE", 1445, 598],
  ["NEW", 1331, 682],
];

const cityLabels: [string, number, number][] = [
  ["Winnipeg", 167, 247],
  ["Minneapolis", 343, 579],
  ["Ottawa", 1143, 550],
  ["Montreal", 1240, 588],
  ["Quebec City", 1346, 458],
  ["Toronto", 920, 662],
];

const cityDots = [
  [167, 260],
  [344, 591],
  [1240, 558],
  [1347, 470],
  [975, 676],
];

function MapCanvas() {
  return (
    <svg
      viewBox="0 0 1424 679"
      preserveAspectRatio="xMidYMid slice"
      className="block size-full"
      role="img"
      aria-label="Flight route over the Great Lakes"
    >
      <rect width="1424" height="679" fill={LAND} />
      <NorthWest />
      <NorthEast />
      <SouthWest />
      <SouthEast />
      <g
        textAnchor="middle"
        fill="#fff"
        stroke="#27354a"
        strokeWidth="5"
        strokeLinejoin="round"
        paintOrder="stroke"
        className="font-['Roboto',sans-serif]"
      >
        {regionLabels.map(([name, x, y], i) => (
          <text key={i} x={x} y={y} className="text-[22px] font-semibold tracking-widest">
            {name}
          </text>
        ))}
        {cityLabels.map(([name, x, y]) => (
          <text key={name} x={x} y={y} className="text-[25px]">
            {name}
          </text>
        ))}
      </g>
      {cityDots.map(([x, y]) => (
        <circle key={x} cx={x} cy={y} r="5" fill="#fff" stroke="#27354a" strokeWidth="2" />
      ))}
      <circle cx="1142" cy="563" r="7" fill="#000" />
      <circle cx="1142" cy="563" r="4" fill="#000" stroke="#fff" strokeWidth="2" />
      <path d="M524 366L556 359L732 333L800 322L902 315" fill="none" stroke="#ee3325" strokeWidth="6" strokeLinejoin="round" />
      <circle cx="524" cy="366" r="32" fill="#e37d73" />
      <g transform="translate(524 366) rotate(-16)">
        <path d="M-4 -4L3 -18L6 -18L5 -3ZM-4 4L3 18L6 18L5 3ZM13 -2L17 -8L19 -8L18 0L19 8L17 8L13 2Z" fill="#d5dadd" />
        <path d="M1 -12h-4v2h4zM-1 -7h-4v2h4zM1 12h-4v-2h4zM-1 7h-4v-2h4z" fill="#fff" />
        <path d="M-17 0C-17 -3 -12 -3 -8 -3L9 -3L19 -1V1L9 3L-8 3C-12 3 -17 3 -17 0Z" fill="#fff" />
        <path d="M-15 -2L-13 -3V3L-15 2Z" fill="#5b6670" />
      </g>
      <text x="14" y="664" className="fill-white font-['Lato',sans-serif] text-[39px] font-bold">
        Google
      </text>
    </svg>
  );
}

const control = "flex items-center justify-center rounded bg-white text-[#666666] shadow-[0_2px_6px_rgba(0,0,0,0.3)]";

function MapCard() {
  return (
    <section className="relative min-h-0 flex-1 overflow-hidden shadow-[0_8px_24px_rgba(0,0,0,0.14)] font-['Roboto',sans-serif]">
      <MapCanvas />
      <div className="absolute left-5 top-5 flex h-20 items-stretch rounded bg-white text-4xl shadow-[0_2px_6px_rgba(0,0,0,0.3)]">
        <button type="button" className="border-r-2 border-[#e8e8e8] px-[33px] pt-[2px] font-medium text-black">
          Map
        </button>
        <button type="button" className="px-[34px] pt-[2px] text-[#565656]">
          Satellite
        </button>
      </div>
      <button type="button" aria-label="Toggle fullscreen" className={`absolute right-5 top-5 size-20 ${control}`}>
        <svg viewBox="0 0 18 18" className="size-9" fill="currentColor">
          <path d="M0 0v6h2V2h4V0H0zm16 0h-4v2h4v4h2V0h-2zm0 16h-4v2h6v-6h-2v4zM2 12H0v6h6v-2H2v-4z" />
        </svg>
      </button>
      <div className="absolute bottom-12 right-5 flex flex-col gap-16">
        <button type="button" aria-label="Street View" className={`size-20 ${control}`}>
          <svg viewBox="0 0 40 64" className="h-16 w-10" stroke="#8a7443" strokeWidth="1.5" fill="#f3bb43">
            <path d="M10 23H30L36 43L32 46L28 38V62H21V46H19V62H12V38L8 46L4 43Z" strokeLinejoin="round" />
            <path d="M15 23H25L20 34Z" fill="#e1863c" stroke="none" />
            <circle cx="20" cy="13" r="10" />
          </svg>
        </button>
        <div className={`flex-col ${control}`}>
          <button type="button" aria-label="Zoom in" className="flex size-20 items-center justify-center">
            <svg viewBox="0 0 18 18" className="size-9" fill="currentColor">
              <path d="M18 7h-7V0H7v7H0v4h7v7h4v-7h7z" />
            </svg>
          </button>
          <span className="h-[2px] w-[60px] bg-[#e6e6e6]" />
          <button type="button" aria-label="Zoom out" className="flex size-20 items-center justify-center">
            <svg viewBox="0 0 18 18" className="size-9" fill="currentColor">
              <path d="M0 7h18v4H0z" />
            </svg>
          </button>
        </div>
      </div>
      <div className="absolute bottom-0 right-0 flex h-7 items-center divide-x-2 divide-[#3d4a5a] bg-[#f5f5f5]/75 text-xl leading-7 text-black">
        <button type="button" className="px-[10px]">
          Keyboard shortcuts
        </button>
        <span className="px-3">Map data ©2021 Google, INEGI</span>
        <a href="#terms" className="px-3">
          Terms of Use
        </a>
      </div>
    </section>
  );
}

/* ---------- flight details ---------- */

const readings = [
  "fuel_flow_pph_4: 0",
  "throttle_percentage: 0",
  "rpm_1: 935.2621600224437",
  "rpm_2: 0",
  "rpm_3: 0",
  "rpm_4: 0",
  "n1_1: 0",
  "n1_2: 0",
  "n1_3: 0",
  "n1_4: 0",
  "n2_1: 0",
  "n2_2: 0",
  "n2_3: 0",
  "n2_4: 0",
  "itt_1: -273.15",
  "itt_2: -273.15",
  "itt_3: -273.15",
  "itt_4: -273.15",
];

const marked = ["eventTime: 2021-09-", "04T19:43:51.075Z", "type: PARKED"];

const events = ["04/09/21 01:44:22 pm", "04/09/21 01:44:50 pm", "04/09/21 01:45:20 pm", "04/09/21 01:45:50 pm"];

function Details() {
  return (
    <aside className={`flex min-w-0 flex-col overflow-hidden ${card}`}>
      <div className={`flex items-start justify-between pl-[49px] pr-[35px] pt-[34px] ${body}`}>
        <div className="pt-[18px]">
          <h2 className="flex h-16 items-center text-5xl font-bold text-[#3a45cb]">
            CYCN
            <ArrowRight className="ml-[6px] mr-1 mt-3 size-8 text-[#c5c0de]" strokeWidth={3} />
            ???
          </h2>
          <p className="text-2xl leading-[34px] text-[#6c6e72]">09/04/2021 | 11:46:22 am - n/a</p>
        </div>
        <button
          type="button"
          aria-label="More options"
          className="flex h-[74px] w-[92px] items-center justify-center rounded-full border-2 border-[#dcdcdc] text-[#2f3033]"
        >
          <FaEllipsisV className="size-7" />
        </button>
      </div>
      <div role="tablist" className={`mt-[18px] flex text-2xl font-bold ${body}`}>
        <button
          type="button"
          role="tab"
          aria-selected="false"
          className="h-[104px] flex-1 border-b-2 border-[#eef0f5] text-[#6e6f79]"
        >
          Summary
        </button>
        <button
          type="button"
          role="tab"
          aria-selected="true"
          className="h-[104px] flex-1 border-b-2 border-[#3a45cb] text-[#3a45cb]"
        >
          Events
        </button>
      </div>
      <div className={`mt-[7px] min-h-0 flex-1 overflow-hidden text-2xl text-black ${inter}`}>
        <div className="-mt-5 pl-[59px] leading-[30px]">
          {readings.map((r) => (
            <p key={r}>{r}</p>
          ))}
          {marked.map((m) => (
            <p key={m}>
              <mark className="inline-block bg-[#d5e7ca] text-black">{m}</mark>
            </p>
          ))}
        </div>
        <ul className="mx-[29px] mt-[29px]">
          {events.map((e) => (
            <li key={e} className="flex h-[62px] items-center border-b-2 border-[#e3e3e3] pl-[5px]">
              <button type="button" aria-label={`Expand ${e}`} className="text-[#3a45cb]">
                <FaPlusSquare className="size-6" />
              </button>
              <span className="ml-[29px] font-bold">{e}</span>
              <span className="ml-9 text-[#8b8b8b]">PARKED</span>
            </li>
          ))}
        </ul>
      </div>
    </aside>
  );
}

/* ---------- page ---------- */

export default function App() {
  return (
    <div className="flex h-screen bg-black">
      <div className="flex w-1 shrink-0 flex-col">
        <div className="h-[200px] bg-[#bfc0bf]" />
        <div className="h-[130px] bg-[#b4b6ab]" />
        <div className="h-[220px] bg-[#a9b597]" />
        <div className="h-[850px] bg-[#b9b9b1]" />
      </div>
      <div className="relative flex min-w-0 flex-1 flex-col overflow-hidden rounded-b-[20px] bg-[#eff0f5]">
        <BrowserTabs />
        <Header />
        <div className="absolute inset-x-[380px] -bottom-10 h-[72px] rounded-full bg-[#cbccd1] blur-2xl" />
        <h1 className={`mb-[27px] ml-10 mt-[37px] text-[46px] font-semibold leading-[60px] text-[#35248f] ${inter}`}>
          InTheBlueYonder's Logbook
        </h1>
        <main className="relative grid min-h-0 flex-1 grid-cols-[3fr_8fr_3fr] grid-rows-[minmax(0,1fr)] gap-[60px] px-[30px] pb-[53px]">
          <LogbookList />
          <div className="flex min-w-0 flex-col gap-[30px] pb-[3px]">
            <ChartCard />
            <MapCard />
          </div>
          <Details />
        </main>
      </div>
      <div className="flex w-[5px] shrink-0 flex-col">
        <div className="h-[90px] bg-[#d0d0d0]" />
        <div className="h-[76px] bg-[#2e63d0]" />
        <div className="h-[36px] bg-[#cfd1cd]" />
        <div className="h-[620px] bg-[#9dae90]" />
        <div className="h-[480px] bg-[#c5c3ba]" />
        <div className="h-[98px] bg-[#a9b79b]" />
      </div>
    </div>
  );
}
